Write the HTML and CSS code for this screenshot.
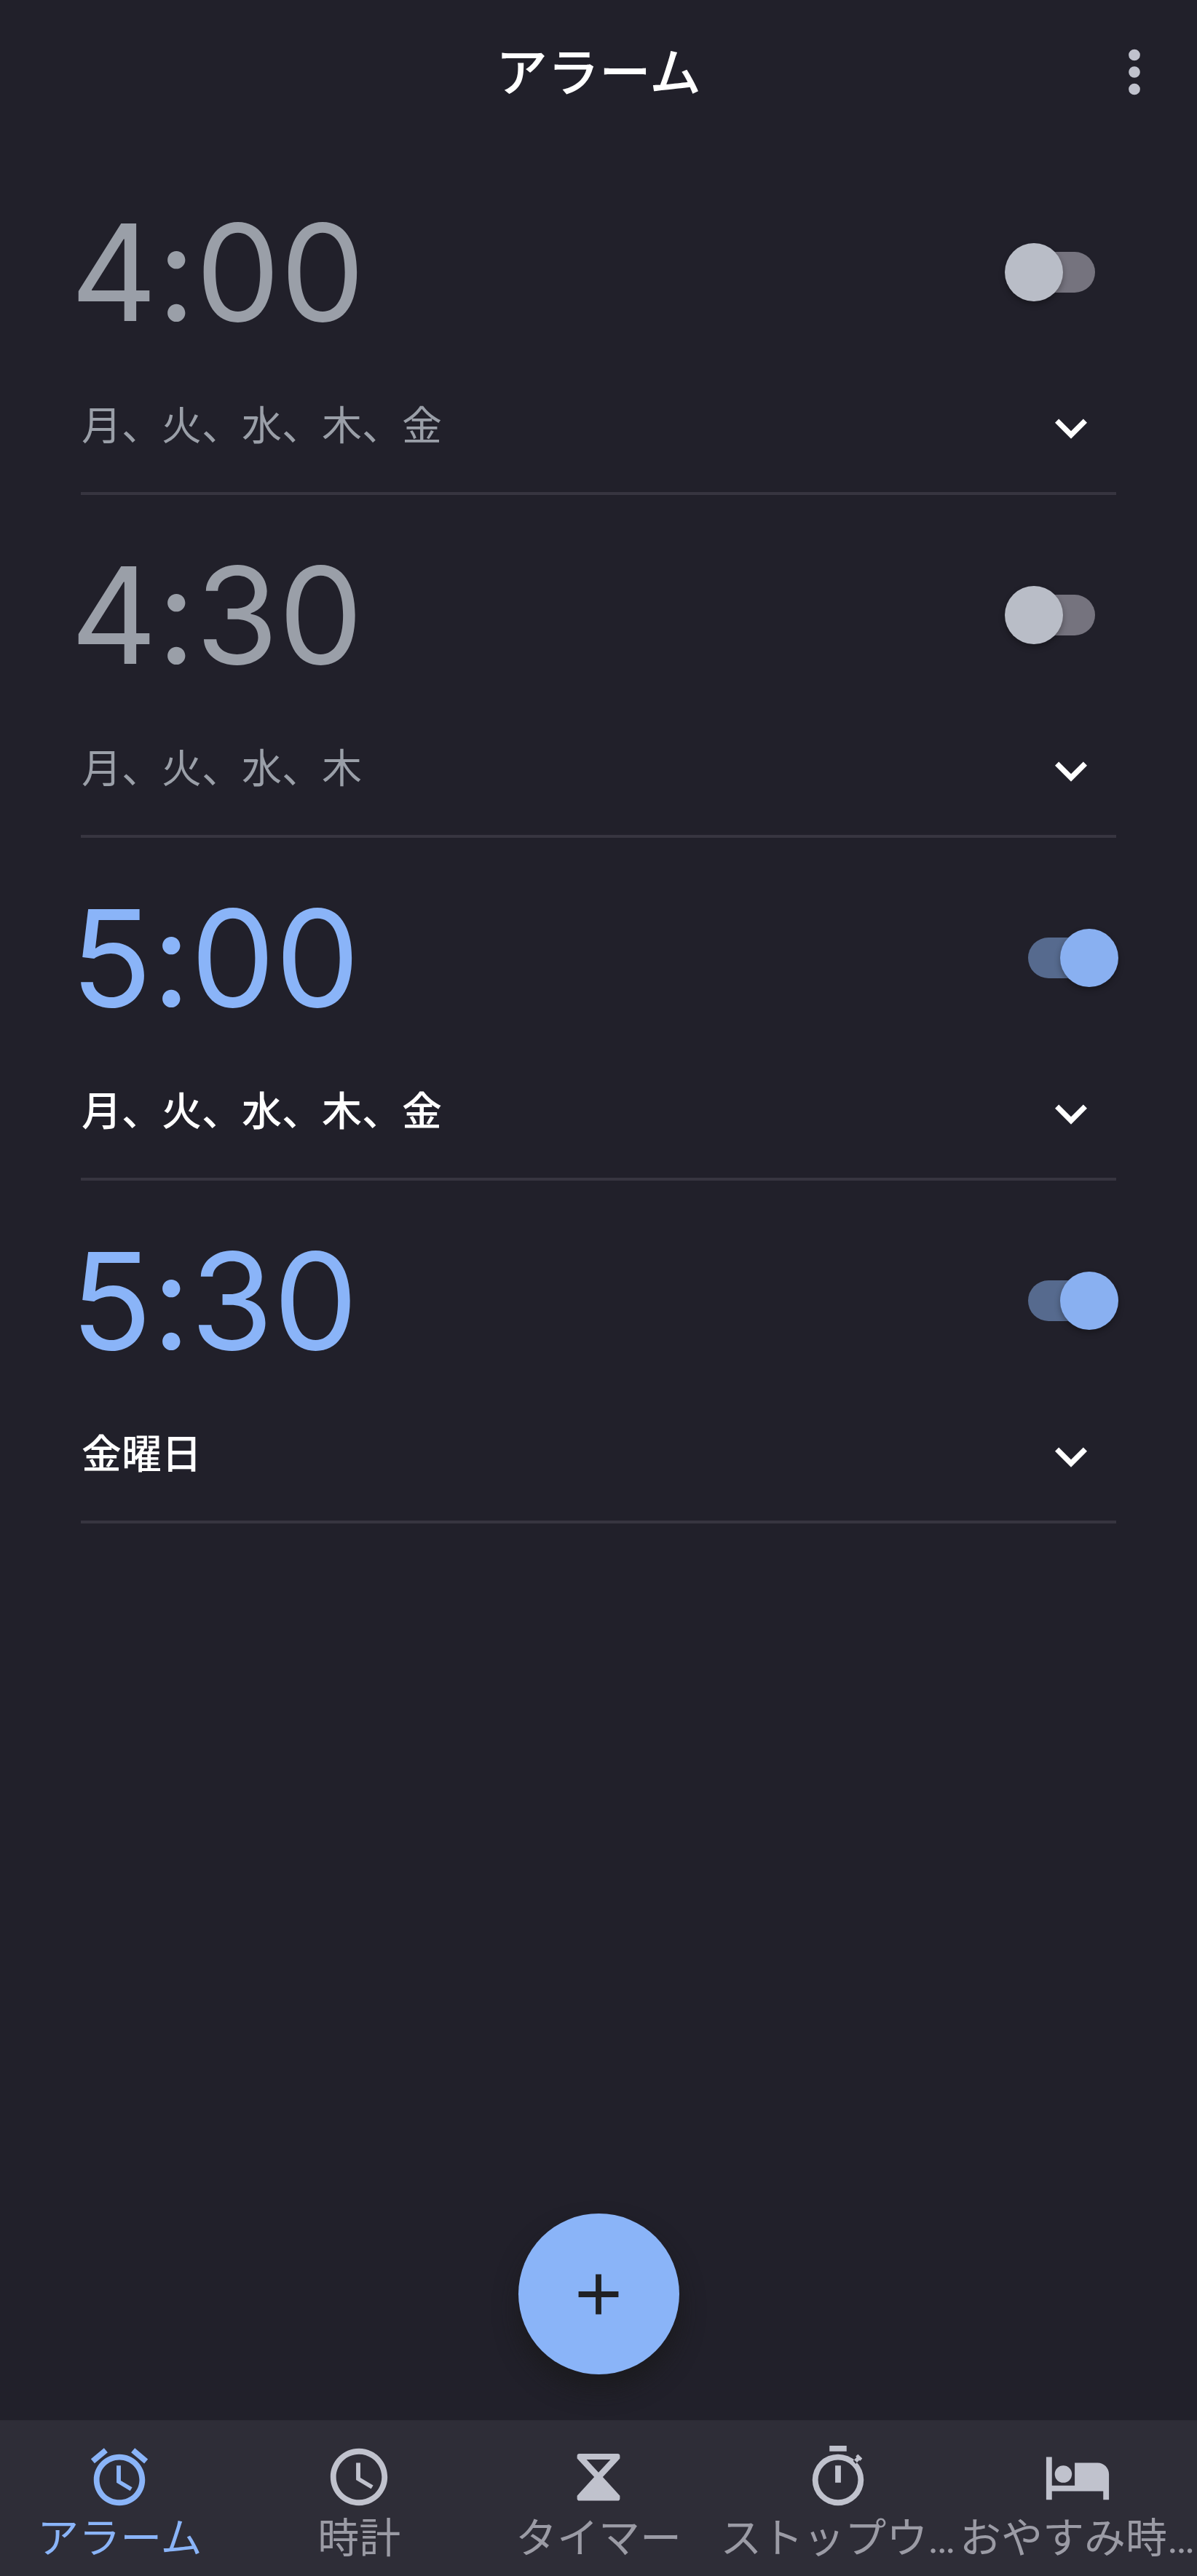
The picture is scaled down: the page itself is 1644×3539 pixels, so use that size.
FILE: index.html
```html
<!DOCTYPE html>
<html lang="ja">
<head>
<meta charset="utf-8">
<meta name="viewport" content="width=device-width, initial-scale=1">
<title>アラーム</title>
<link rel="stylesheet" href="styles.css">
</head>
<body>
<div class="app">
  <header class="topbar">
    <h1 class="title">アラーム</h1>
    <button class="icon-button menu" type="button" aria-label="その他のオプション">
      <svg class="icon" viewBox="0 0 24 24" aria-hidden="true"><circle cx="12" cy="6" r="2"/><circle cx="12" cy="12" r="2"/><circle cx="12" cy="18" r="2"/></svg>
    </button>
  </header>

  <main class="alarms">
    <section class="alarm">
      <div class="alarm-row">
        <button class="time" type="button">4:00</button>
        <input class="switch" type="checkbox" role="switch" aria-label="4:00 のアラーム">
      </div>
      <div class="alarm-row days-row">
        <p class="days">月、火、水、木、金</p>
        <button class="icon-button expand" type="button" aria-label="4:00 の詳細を開く">
          <svg class="icon" viewBox="0 0 24 24" aria-hidden="true"><path d="M16.59 8.59 12 13.17 7.41 8.59 6 10l6 6 6-6z"/></svg>
        </button>
      </div>
    </section>

    <section class="alarm">
      <div class="alarm-row">
        <button class="time" type="button">4:30</button>
        <input class="switch" type="checkbox" role="switch" aria-label="4:30 のアラーム">
      </div>
      <div class="alarm-row days-row">
        <p class="days">月、火、水、木</p>
        <button class="icon-button expand" type="button" aria-label="4:30 の詳細を開く">
          <svg class="icon" viewBox="0 0 24 24" aria-hidden="true"><path d="M16.59 8.59 12 13.17 7.41 8.59 6 10l6 6 6-6z"/></svg>
        </button>
      </div>
    </section>

    <section class="alarm alarm-on">
      <div class="alarm-row">
        <button class="time" type="button">5:00</button>
        <input class="switch" type="checkbox" role="switch" aria-label="5:00 のアラーム" checked>
      </div>
      <div class="alarm-row days-row">
        <p class="days">月、火、水、木、金</p>
        <button class="icon-button expand" type="button" aria-label="5:00 の詳細を開く">
          <svg class="icon" viewBox="0 0 24 24" aria-hidden="true"><path d="M16.59 8.59 12 13.17 7.41 8.59 6 10l6 6 6-6z"/></svg>
        </button>
      </div>
    </section>

    <section class="alarm alarm-on">
      <div class="alarm-row">
        <button class="time" type="button">5:30</button>
        <input class="switch" type="checkbox" role="switch" aria-label="5:30 のアラーム" checked>
      </div>
      <div class="alarm-row days-row">
        <p class="days">金曜日</p>
        <button class="icon-button expand" type="button" aria-label="5:30 の詳細を開く">
          <svg class="icon" viewBox="0 0 24 24" aria-hidden="true"><path d="M16.59 8.59 12 13.17 7.41 8.59 6 10l6 6 6-6z"/></svg>
        </button>
      </div>
    </section>
  </main>

  <button class="fab" type="button" aria-label="アラームを追加">
    <svg class="icon" viewBox="0 0 24 24" aria-hidden="true"><path d="M19 13h-6v6h-2v-6H5v-2h6V5h2v6h6z"/></svg>
  </button>

  <nav class="tabs">
    <a class="tab tab-active" href="#alarm" aria-current="page">
      <svg class="icon" viewBox="0 0 24 24" aria-hidden="true"><path d="M22 5.72l-4.6-3.86-1.29 1.53 4.6 3.86L22 5.72zM7.88 3.39L6.6 1.86 2 5.71l1.29 1.53 4.59-3.85zM12.5 8H11v6l4.75 2.85.75-1.23-4-2.37V8zM12 4c-4.97 0-9 4.03-9 9s4.02 9 9 9c4.97 0 9-4.03 9-9s-4.03-9-9-9zm0 16c-3.87 0-7-3.13-7-7s3.13-7 7-7 7 3.13 7 7-3.13 7-7 7z"/></svg>
      <span class="tab-label">アラーム</span>
    </a>
    <a class="tab" href="#clock">
      <svg class="icon" viewBox="0 0 24 24" aria-hidden="true"><path d="M11.99 2C6.47 2 2 6.48 2 12s4.47 10 9.99 10C17.52 22 22 17.52 22 12S17.52 2 11.99 2zM12 20c-4.42 0-8-3.58-8-8s3.58-8 8-8 8 3.58 8 8-3.58 8-8 8zm.5-13H11v6l5.25 3.15.75-1.23-4.5-2.67z"/></svg>
      <span class="tab-label">時計</span>
    </a>
    <a class="tab" href="#timer">
      <svg class="icon" viewBox="0 0 24 24" aria-hidden="true"><path fill-rule="evenodd" d="M5.3 3.800h13.400q.8 0 .8.8v.9L13.500 12l6 6.600v.9q0 .8-.8.8H5.300q-.8 0-.8-.8v-.9l6-6.600-6-6.500v-.9q0-.8.8-.8zM7.800 5.900 12 10.400l4.200-4.500z"/></svg>
      <span class="tab-label">タイマー</span>
    </a>
    <a class="tab" href="#stopwatch">
      <svg class="icon" viewBox="0 0 24 24" aria-hidden="true"><path d="M15 1H9v2h6zM11 14h2V8h-2zM12 4a9 9 0 1 0 0 18 9 9 0 0 0 0-18zm0 16a7 7 0 1 1 0-14 7 7 0 0 1 0 14zM17.300 6.300l1.200-1.200-.3-.4.8-.7 1.500 1.500-.7.800-.4-.2-1.200 1.300z"/></svg>
      <span class="tab-label">ストップウ…</span>
    </a>
    <a class="tab" href="#bedtime">
      <svg class="icon" viewBox="0 0 24 24" aria-hidden="true"><circle cx="7" cy="11" r="3"/><path d="M19 7h-8v8H3V5H1v15h2v-3h18v3h2v-9c0-2.210-1.790-4-4-4z"/></svg>
      <span class="tab-label">おやすみ時…</span>
    </a>
  </nav>
</div>
</body>
</html>
```
FILE: styles.css
```css
:root {
  --bg: #21202a;
  --bar: #2e2d37;
  --line: #373540;
  --blue: #8ab4f8;
  --muted: #9a9fa8;
  --icon: #c0c2cd;
}

* { box-sizing: border-box; }

html, body { height: 100%; }

body {
  margin: 0;
  background: var(--bg);
  color: #fff;
  font-family: Roboto, "Noto Sans CJK JP", sans-serif;
}

button {
  margin: 0;
  padding: 0;
  border: 0;
  background: none;
  color: inherit;
  font: inherit;
}

.app {
  display: flex;
  flex-direction: column;
  min-height: 100%;
}

.icon {
  display: block;
  width: 94px;
  height: 94px;
  fill: currentColor;
}

.topbar {
  display: grid;
  grid-template-columns: 1fr auto 1fr;
  align-items: center;
  height: 198px;
  padding: 0 39px;
}

.title {
  grid-column: 2;
  margin: 0;
  padding-top: 4px;
  font-size: 71px;
  line-height: 80px;
  font-weight: 500;
}

.menu {
  justify-self: end;
  color: var(--icon);
}

.alarms {
  flex: 1;
  padding: 11px 111px 0;
}

.alarm {
  height: 471px;
  padding-top: 60px;
  border-bottom: 4px solid var(--line);
  color: var(--muted);
}

.alarm-row {
  display: flex;
  align-items: center;
  justify-content: space-between;
}

.time {
  height: 210px;
  margin-left: -14px;
  font-family: Inter, sans-serif;
  font-size: 184px;
  line-height: 210px;
  font-feature-settings: "calt" 0;
}

.alarm-on { color: #fff; }

.alarm-on .time { color: var(--blue); }

.alarm-on .days { font-weight: 500; }

.switch {
  appearance: none;
  position: relative;
  display: flex;
  align-items: center;
  width: 156px;
  height: 80px;
  margin: 0 -3px 0 0;
}

.switch::before {
  content: "";
  width: 92px;
  height: 56px;
  margin: 0 32px;
  border-radius: 28px;
  background: #75737e;
}

.switch::after {
  content: "";
  position: absolute;
  left: 0;
  top: 0;
  width: 80px;
  height: 80px;
  border-radius: 50%;
  background: #b9bdc7;
  box-shadow: 0 4px 8px rgba(0, 0, 0, .3);
}

.switch:checked::before { background: #566a8e; }

.switch:checked::after {
  left: auto;
  right: 0;
  background: #89b0f1;
}

.days-row {
  align-items: flex-start;
  height: 94px;
  margin-top: 62px;
}

.days {
  margin: 0;
  padding-left: 1px;
  font-size: 55px;
  line-height: 88px;
}

.expand {
  margin: 3px 18px 0 0;
  color: #fff;
}

.expand .icon {
  width: 88px;
  height: 88px;
}

.fab {
  display: grid;
  place-items: center;
  align-self: center;
  width: 221px;
  height: 221px;
  margin-bottom: 63px;
  border-radius: 50%;
  background: var(--blue);
  color: #202124;
  box-shadow: 0 20px 32px rgba(24, 24, 24, .6);
}

.tabs {
  display: grid;
  grid-template-columns: repeat(5, 1fr);
  height: 214px;
  background: var(--bar);
}

.tab {
  display: flex;
  flex-direction: column;
  align-items: center;
  padding-top: 31px;
  color: var(--icon);
  text-decoration: none;
}

.tab-label {
  color: #9b9ba5;
  font-size: 57px;
  line-height: 76px;
  white-space: nowrap;
}

.tab-active,
.tab-active .tab-label {
  color: var(--blue);
}
```
